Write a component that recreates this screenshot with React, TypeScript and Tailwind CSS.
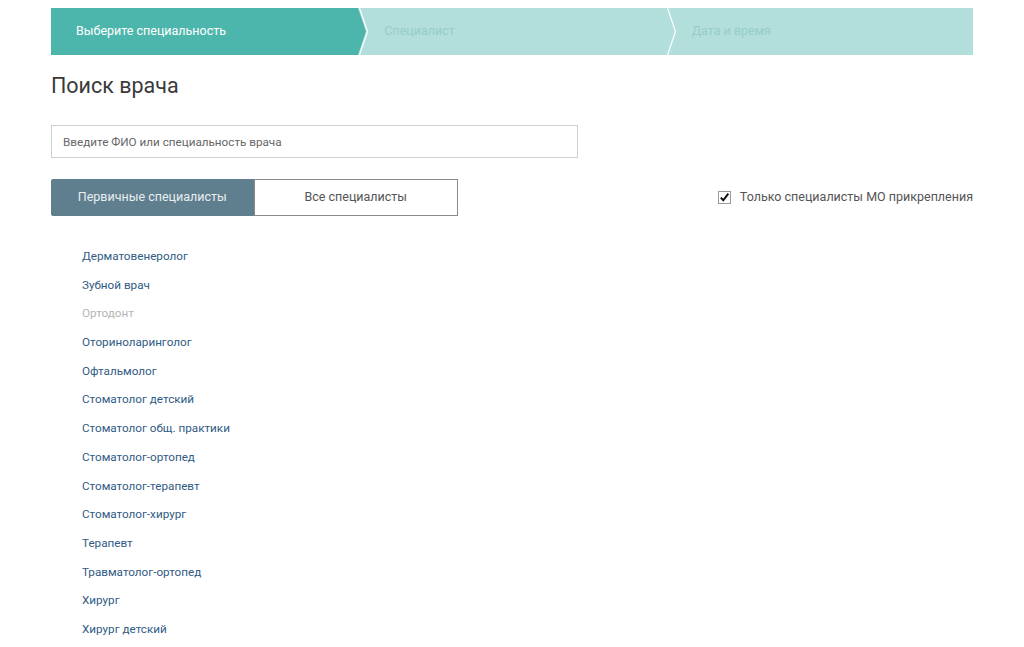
import React from "react";

const steps = [
  { label: "Выберите специальность", active: true },
  { label: "Специалист", active: false },
  { label: "Дата и время", active: false },
];

const specialties = [
  { name: "Дерматовенеролог" },
  { name: "Зубной врач" },
  { name: "Ортодонт", disabled: true },
  { name: "Оториноларинголог" },
  { name: "Офтальмолог" },
  { name: "Стоматолог детский" },
  { name: "Стоматолог общ. практики" },
  { name: "Стоматолог-ортопед" },
  { name: "Стоматолог-терапевт" },
  { name: "Стоматолог-хирург" },
  { name: "Терапевт" },
  { name: "Травматолог-ортопед" },
  { name: "Хирург" },
  { name: "Хирург детский" },
];

function Chevron({ fill }: { fill: string }) {
  return (
    <svg
      className="absolute left-full top-0 z-10"
      width="12"
      height="47"
      viewBox="0 0 12 47"
    >
      <polygon points="0,0 8,23.5 0,47" fill={fill} />
      <polyline
        points="1.5,0 9.5,23.5 1.5,47"
        fill="none"
        stroke="#ffffff"
        strokeWidth="1.2"
      />
    </svg>
  );
}

export default function App() {
  return (
    <main
      className="min-h-[647px] bg-white px-[51px] pt-2"
      style={{ fontFamily: "Roboto, 'Liberation Sans', sans-serif" }}
    >
      {/* stepper */}
      <div className="flex h-[47px] w-[922px]">
        {steps.map((s, i) => (
          <div
            key={s.label}
            className={
              "relative flex flex-1 items-center pl-[25px] text-[12.5px] " +
              (s.active
                ? "bg-[#4db6ac] text-white"
                : "bg-[#b2dfdb] text-[#97cdc7]")
            }
          >
            <span className={i > 0 ? "pl-[1px]" : ""}>{s.label}</span>
            {i < steps.length - 1 && (
              <Chevron fill={s.active ? "#4db6ac" : "#b2dfdb"} />
            )}
          </div>
        ))}
      </div>

      <h1 className="mt-[18px] text-[21.5px] leading-[26px] text-[#3a3a3a]">
        Поиск врача
      </h1>

      <input
        type="text"
        placeholder="Введите ФИО или специальность врача"
        className="mt-[26px] block h-[33px] w-[527px] border border-[#cfcfcf] px-[11px] text-[11.7px] text-[#444] placeholder:text-[#666] outline-none"
      />

      <div className="mt-[21px] flex items-center justify-between">
        <div className="flex h-[37px] w-[407px]">
          <button className="flex-1 rounded-l-[2px] bg-[#5f7f8e] text-[12.5px] text-[#e8eef1]">
            Первичные специалисты
          </button>
          <button className="flex-1 border border-[#8a8a8a] bg-white text-[12.5px] text-[#555]">
            Все специалисты
          </button>
        </div>
        <label className="flex items-center gap-[9px] text-[12.5px] text-[#555]">
          <span className="flex h-[13px] w-[13px] items-center justify-center border border-[#9a9a9a] bg-white">
            <svg width="11" height="11" viewBox="0 0 11 11">
              <path
                d="M1.8 5.6 L4.3 8.3 L9.3 1.6"
                fill="none"
                stroke="#111"
                strokeWidth="2"
              />
            </svg>
          </span>
          Только специалисты МО прикрепления
        </label>
      </div>

      <ul className="mt-[26px] pl-[31px]">
        {specialties.map((s) => (
          <li
            key={s.name}
            className={
              "h-[28.7px] text-[11.7px] leading-[28.7px] " +
              (s.disabled ? "text-[#b5b5b5]" : "text-[#2f5b85]")
            }
          >
            {s.name}
          </li>
        ))}
      </ul>
    </main>
  );
}
